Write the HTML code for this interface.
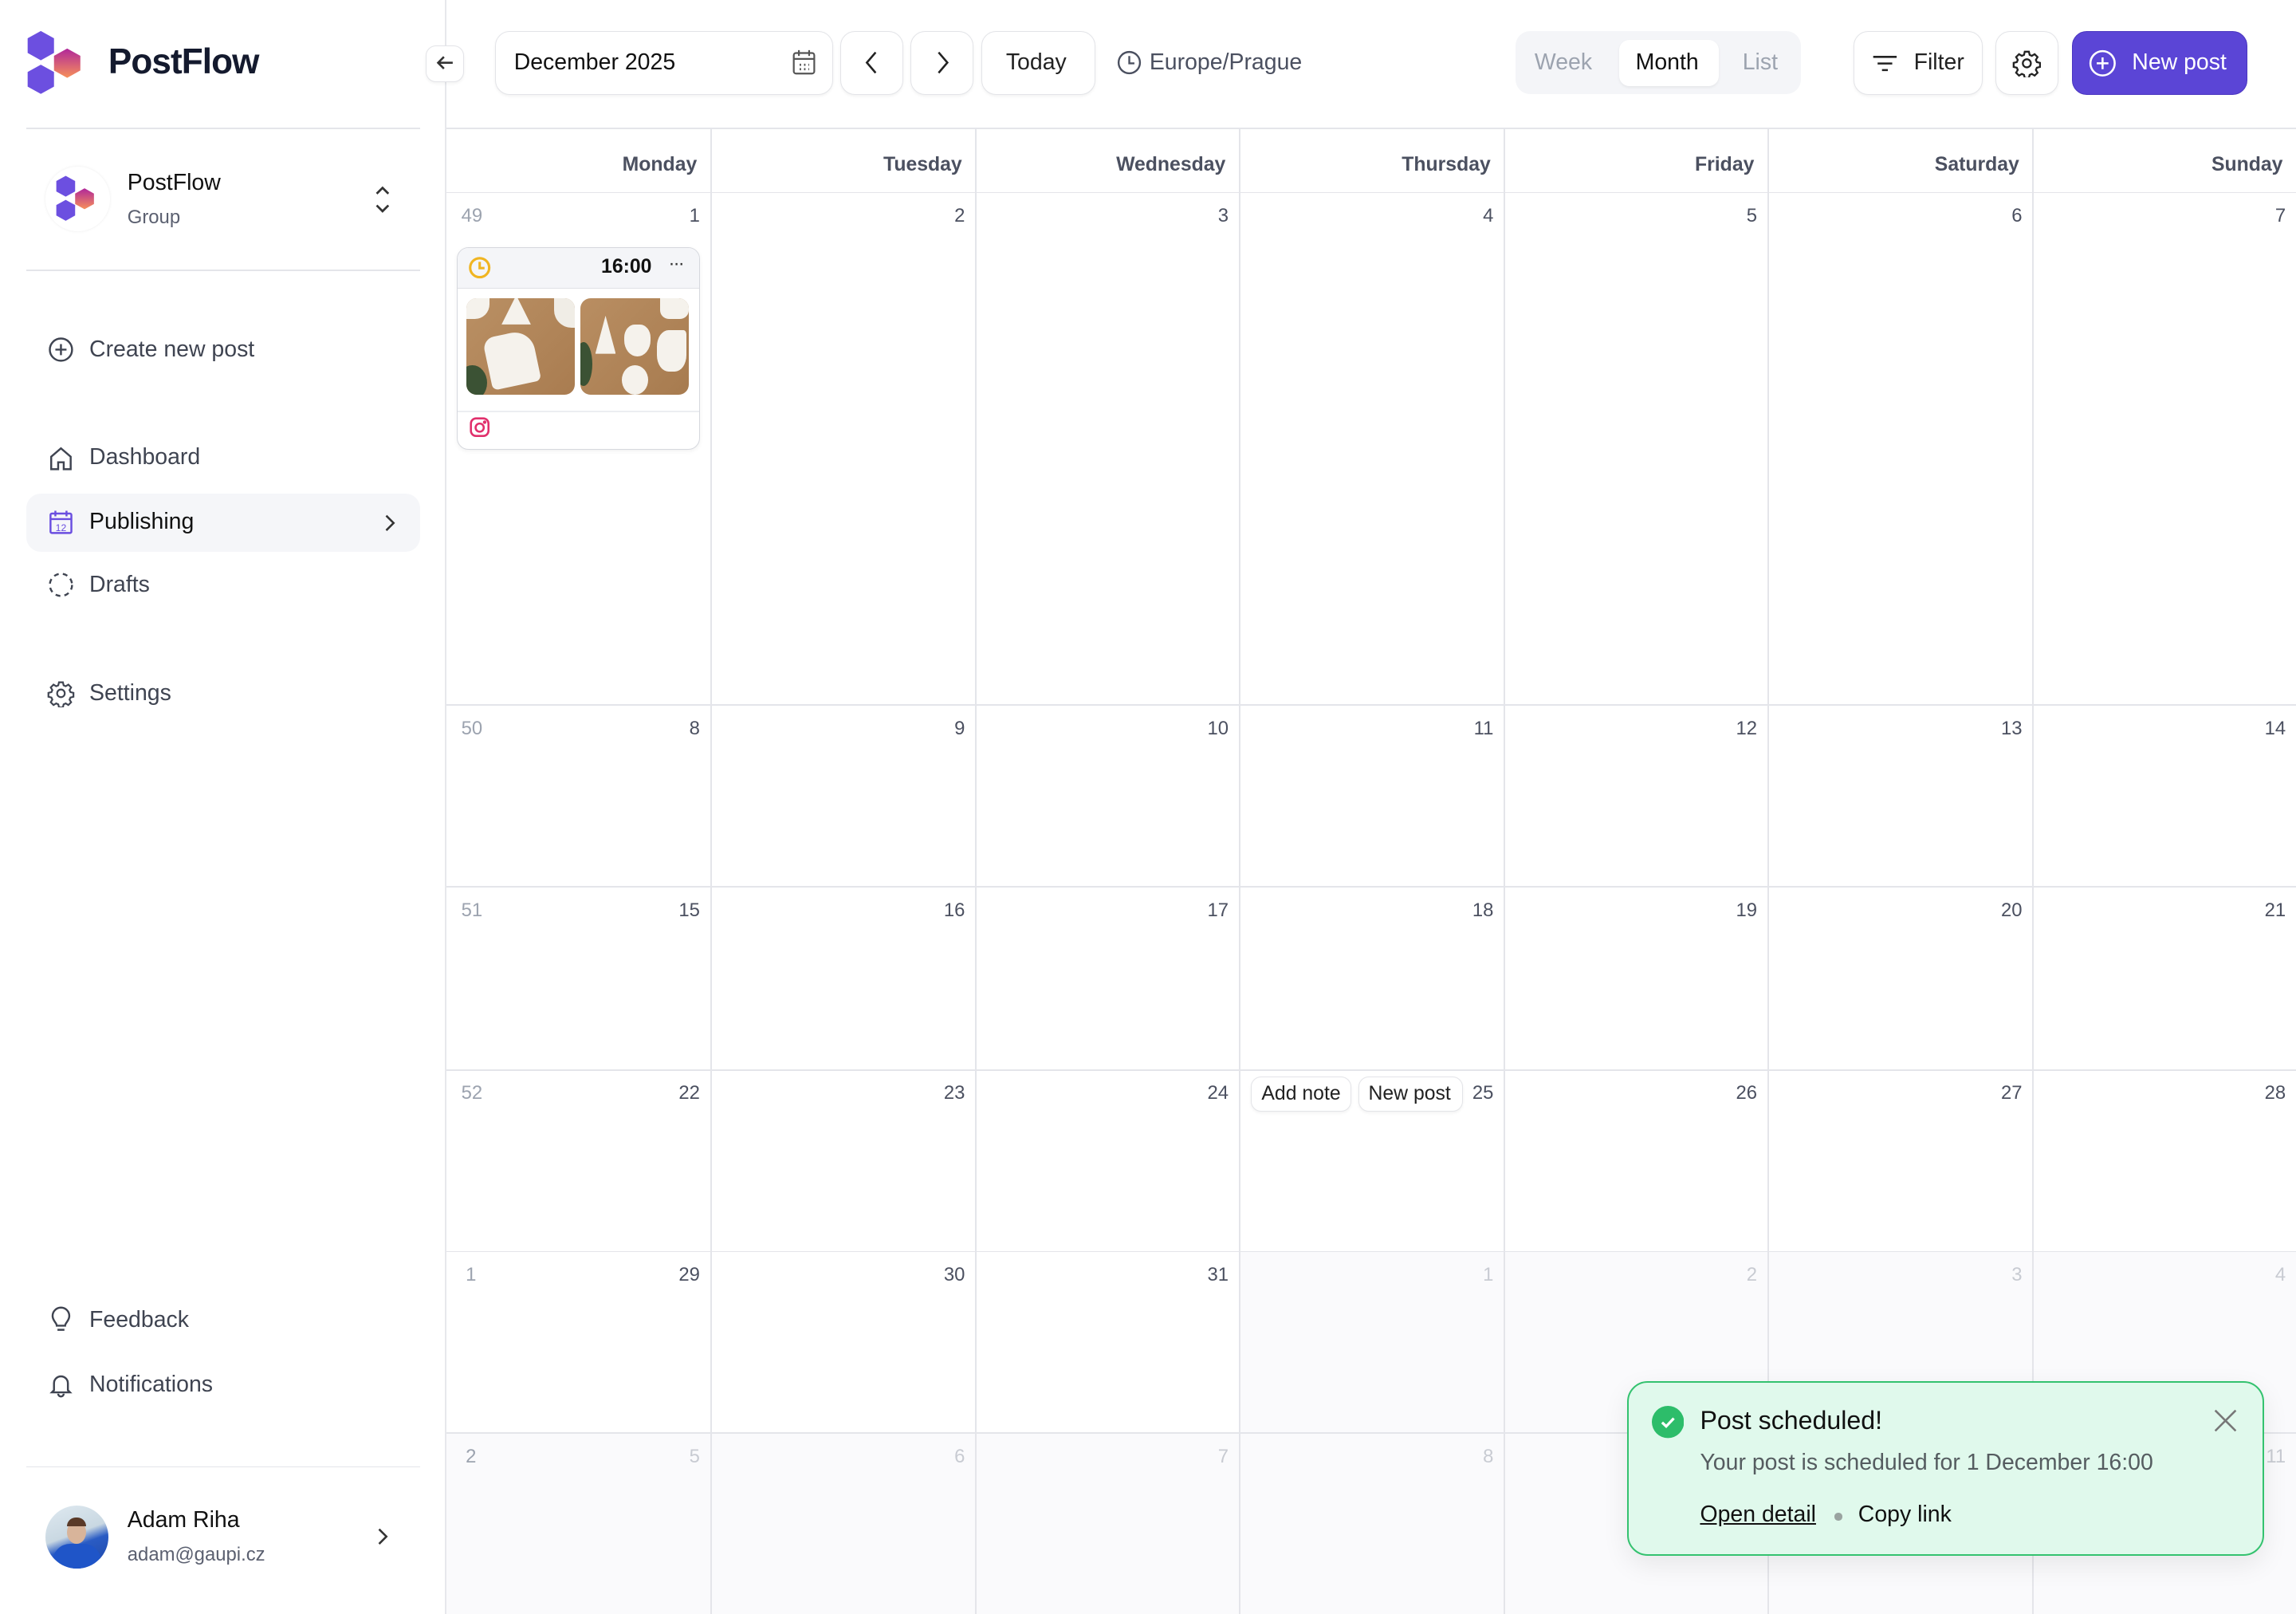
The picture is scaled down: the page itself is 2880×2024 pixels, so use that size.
<!DOCTYPE html>
<html><head><meta charset="utf-8">
<style>
html,body{margin:0;padding:0;}
html{zoom:1.83673;}
body{width:1568px;height:1102px;position:relative;overflow:hidden;background:#fff;font-family:"Liberation Sans",sans-serif;color:#111827;}
.a{position:absolute;}
.btn{position:absolute;border:1px solid #e3e4e8;border-radius:10px;background:#fff;box-shadow:0 1px 2px rgba(0,0,0,.05);box-sizing:border-box;}
.nav{position:absolute;left:32px;font-size:15.5px;color:#3f4451;display:flex;align-items:center;gap:10px;}
.nav svg{width:19px;height:19px;}
.hd{position:absolute;top:105px;font-size:13.5px;font-weight:bold;color:#4b5060;text-align:right;width:171px;}
.vl{position:absolute;top:87px;width:1px;height:1015px;background:#e4e5ea;}
.hl{position:absolute;left:305px;width:1263px;height:1px;background:#e4e5ea;}
.n{position:absolute;font-size:13px;color:#4b5060;text-align:right;width:171px;}
.w{position:absolute;font-size:13px;color:#9ca3af;}
.g{color:#c8cbd2;}
</style></head><body>

<!-- sidebar -->
<div class="a" style="left:304px;top:0;width:1px;height:1102px;background:#e7e8ec"></div>
<svg class="a" style="left:17px;top:20px" width="42" height="46" viewBox="0 0 42 46">
<defs><linearGradient id="lg" x1="0" y1="0" x2="0" y2="1"><stop offset="0" stop-color="#b0279a"/><stop offset="1" stop-color="#f7905a"/></linearGradient></defs>
<polygon points="11,1 20,6 20,16 11,21 2,16 2,6" fill="#6c4fe0"/>
<polygon points="11,24 20,29 20,39 11,44 2,39 2,29" fill="#6c4fe0"/>
<polygon points="29,13 38,18 38,28 29,33 20,28 20,18" fill="url(#lg)"/>
</svg>
<div class="a" style="left:74px;top:29px;font-size:24px;font-weight:bold;letter-spacing:-0.5px;color:#141a2e">PostFlow</div>
<div class="a" style="left:18px;top:87px;width:269px;height:1px;background:#e4e5ea"></div>

<div class="a" style="left:31px;top:114px;width:44px;height:44px;border-radius:50%;background:#fff;box-shadow:0 0 2px rgba(0,0,0,.08)"></div>
<svg class="a" style="left:37px;top:119px" width="30" height="33" viewBox="0 0 42 46">
<polygon points="11,1 20,6 20,16 11,21 2,16 2,6" fill="#6c4fe0"/>
<polygon points="11,24 20,29 20,39 11,44 2,39 2,29" fill="#6c4fe0"/>
<polygon points="29,13 38,18 38,28 29,33 20,28 20,18" fill="url(#lg)"/>
</svg>
<div class="a" style="left:87px;top:116px;font-size:15.5px;color:#111">PostFlow</div>
<div class="a" style="left:87px;top:141px;font-size:13px;color:#5b6070">Group</div>
<svg class="a" style="left:254px;top:125px" width="14" height="22" viewBox="0 0 14 22" fill="none" stroke="#333" stroke-width="1.5"><path d="M3 7l4-4 4 4M3 15l4 4 4-4"/></svg>
<div class="a" style="left:18px;top:184px;width:269px;height:1px;background:#e4e5ea"></div>

<div class="nav" style="top:229px"><svg viewBox="0 0 20 20" fill="none" stroke="#3f4451" stroke-width="1.4"><circle cx="10" cy="10" r="8"/><path d="M10 6v8M6 10h8"/></svg>Create new post</div>
<div class="nav" style="top:303px"><svg viewBox="0 0 20 20" fill="none" stroke="#3f4451" stroke-width="1.4"><path d="M3 9l7-6 7 6v9h-5v-5H8v5H3z"/></svg>Dashboard</div>
<div class="a" style="left:18px;top:337px;width:269px;height:40px;border-radius:10px;background:#f5f6f9"></div>
<div class="nav" style="top:347px;color:#111;font-weight:500"><svg viewBox="0 0 20 20" fill="none" stroke="#6a4ee0" stroke-width="1.4"><rect x="2.5" y="4" width="15" height="14" rx="1"/><path d="M2.5 8h15M6 2v4M14 2v4"/><text x="10" y="16.5" font-size="7" text-anchor="middle" fill="#6a4ee0" stroke="none" font-family="Liberation Sans">12</text></svg>Publishing</div>
<svg class="a" style="left:261px;top:350px" width="10" height="14" viewBox="0 0 10 14" fill="none" stroke="#333" stroke-width="1.4"><path d="M3 2l5 5-5 5"/></svg>
<div class="nav" style="top:390px"><svg viewBox="0 0 20 20" fill="none" stroke="#3f4451" stroke-width="1.4" stroke-dasharray="3.5 3"><circle cx="10" cy="10" r="8"/></svg>Drafts</div>
<div class="nav" style="top:464px"><svg viewBox="0 0 24 24" fill="none" stroke="#3f4451" stroke-width="1.5"><path d="M10.3 2.5h3.4l.6 2.6 1.8.8 2.3-1.4 2.4 2.4-1.4 2.3.8 1.8 2.6.6v3.4l-2.6.6-.8 1.8 1.4 2.3-2.4 2.4-2.3-1.4-1.8.8-.6 2.6h-3.4l-.6-2.6-1.8-.8-2.3 1.4-2.4-2.4 1.4-2.3-.8-1.8-2.6-.6v-3.4l2.6-.6.8-1.8-1.4-2.3 2.4-2.4 2.3 1.4 1.8-.8z"/><circle cx="12" cy="12" r="3.3"/></svg>Settings</div>

<div class="nav" style="top:892px"><svg viewBox="0 0 20 20" fill="none" stroke="#3f4451" stroke-width="1.4"><path d="M7 14c0-2-3-3.5-3-7a6 6 0 0112 0c0 3.5-3 5-3 7zM7.5 17h5"/></svg>Feedback</div>
<div class="nav" style="top:936px"><svg viewBox="0 0 20 20" fill="none" stroke="#3f4451" stroke-width="1.4"><path d="M5 14V9a5 5 0 0110 0v5l1.5 1.5h-13zM8 16.5a2 2 0 004 0"/></svg>Notifications</div>
<div class="a" style="left:18px;top:1001px;width:269px;height:1px;background:#e4e5ea"></div>
<div class="a" style="left:31px;top:1028px;width:43px;height:43px;border-radius:50%;overflow:hidden;background:linear-gradient(160deg,#dfe9f0 0%,#c9d8e2 45%,#2a5cc4 60%,#1e47a8 100%)">
<div class="a" style="left:15px;top:10px;width:13px;height:16px;border-radius:50%;background:#d8b49a"></div>
<div class="a" style="left:15px;top:8px;width:13px;height:6px;border-radius:6px 6px 0 0;background:#5a3a28"></div>
<div class="a" style="left:5px;top:26px;width:33px;height:20px;border-radius:12px 12px 0 0;background:#1f55c8"></div></div>
<div class="a" style="left:87px;top:1029px;font-size:15.5px;color:#111">Adam Riha</div>
<div class="a" style="left:87px;top:1054px;font-size:13px;color:#5b6070">adam@gaupi.cz</div>
<svg class="a" style="left:256px;top:1042px" width="10" height="14" viewBox="0 0 10 14" fill="none" stroke="#333" stroke-width="1.4"><path d="M3 2l5 5-5 5"/></svg>

<!-- toolbar -->
<div class="btn" style="left:291px;top:31px;width:26px;height:25px;border-radius:7px"></div>
<svg class="a" style="left:296px;top:35px" width="16" height="16" viewBox="0 0 16 16" fill="none" stroke="#333" stroke-width="1.4"><path d="M13 8H3M7 4L3 8l4 4"/></svg>
<div class="btn" style="left:338px;top:21px;width:231px;height:44px"></div>
<div class="a" style="left:351px;top:34px;font-size:15.5px;color:#111">December 2025</div>
<svg class="a" style="left:540px;top:33px" width="18" height="19" viewBox="0 0 18 19" fill="none" stroke="#555" stroke-width="1.2"><rect x="2" y="3" width="14" height="14" rx="1.5"/><path d="M2 7h14M5.5 1v4M12.5 1v4"/><path d="M6 11h1M9 11h1M12 11h0.5M6 14h1M9 14h1M12 14h0.5" stroke-width="1.5"/></svg>
<div class="btn" style="left:574px;top:21px;width:43px;height:44px"></div>
<svg class="a" style="left:588px;top:34px" width="14" height="18" viewBox="0 0 14 18" fill="none" stroke="#222" stroke-width="1.4"><path d="M10 2L4 9l6 7"/></svg>
<div class="btn" style="left:622px;top:21px;width:43px;height:44px"></div>
<svg class="a" style="left:637px;top:34px" width="14" height="18" viewBox="0 0 14 18" fill="none" stroke="#222" stroke-width="1.4"><path d="M4 2l6 7-6 7"/></svg>
<div class="btn" style="left:670px;top:21px;width:78px;height:44px"></div>
<div class="a" style="left:687px;top:34px;font-size:15.5px;color:#222">Today</div>
<svg class="a" style="left:762px;top:34px" width="18" height="18" viewBox="0 0 18 18" fill="none" stroke="#4b5060" stroke-width="1.3"><circle cx="9" cy="9" r="7.3"/><path d="M9 4.5V9.5h3.5"/></svg>
<div class="a" style="left:785px;top:34px;font-size:15.5px;color:#4b5060">Europe/Prague</div>

<div class="a" style="left:1035px;top:21px;width:195px;height:43px;border-radius:10px;background:#f4f5f8"></div>
<div class="a" style="left:1106px;top:27px;width:68px;height:32px;border-radius:7px;background:#fff;box-shadow:0 1px 2px rgba(0,0,0,.06)"></div>
<div class="a" style="left:1048px;top:34px;font-size:15.5px;color:#9ca3af">Week</div>
<div class="a" style="left:1117px;top:34px;font-size:15.5px;color:#111">Month</div>
<div class="a" style="left:1190px;top:34px;font-size:15.5px;color:#9ca3af">List</div>

<div class="btn" style="left:1266px;top:21px;width:88px;height:44px"></div>
<svg class="a" style="left:1277px;top:35px" width="20" height="16" viewBox="0 0 20 16" fill="none" stroke="#222" stroke-width="1.4"><path d="M2 4h16M5 8.5h10M8 13h4"/></svg>
<div class="a" style="left:1307px;top:34px;font-size:15.5px;color:#222">Filter</div>
<div class="btn" style="left:1363px;top:21px;width:43px;height:44px"></div>
<svg class="a" style="left:1374px;top:33px" width="20" height="20" viewBox="0 0 24 24" fill="none" stroke="#222" stroke-width="1.5"><path d="M10.3 2.5h3.4l.6 2.6 1.8.8 2.3-1.4 2.4 2.4-1.4 2.3.8 1.8 2.6.6v3.4l-2.6.6-.8 1.8 1.4 2.3-2.4 2.4-2.3-1.4-1.8.8-.6 2.6h-3.4l-.6-2.6-1.8-.8-2.3 1.4-2.4-2.4 1.4-2.3-.8-1.8-2.6-.6v-3.4l2.6-.6.8-1.8-1.4-2.3 2.4-2.4 2.3 1.4 1.8-.8z"/><circle cx="12" cy="12" r="3.3"/></svg>
<div class="a" style="left:1415px;top:21px;width:120px;height:44px;border-radius:10px;background:#5b45d6;box-sizing:border-box;border:1px solid #4a36c0"></div>
<svg class="a" style="left:1426px;top:33px" width="20" height="20" viewBox="0 0 20 20" fill="none" stroke="#fff" stroke-width="1.4"><circle cx="10" cy="10" r="8.3"/><path d="M10 6v8M6 10h8"/></svg>
<div class="a" style="left:1456px;top:34px;font-size:15.5px;color:#fff">New post</div>

<!-- calendar -->
<div class="hl" style="top:87px"></div>
<div class="hl" style="top:131px"></div>
<div class="a" style="left:305px;top:854px;width:1263px;height:248px;background:#fafafc"></div>
<div class="a" style="left:305px;top:855px;width:541px;height:123px;background:#fff"></div>
<div class="hl" style="top:481px"></div>
<div class="hl" style="top:605px"></div>
<div class="hl" style="top:730px"></div>
<div class="hl" style="top:854px"></div>
<div class="hl" style="top:978px"></div>
<div class="vl" style="left:485px"></div><div class="vl" style="left:666px"></div><div class="vl" style="left:846px"></div><div class="vl" style="left:1027px"></div><div class="vl" style="left:1207px"></div><div class="vl" style="left:1388px"></div>

<div class="hd" style="left:305px">Monday</div><div class="hd" style="left:486px">Tuesday</div><div class="hd" style="left:666px">Wednesday</div><div class="hd" style="left:847px">Thursday</div><div class="hd" style="left:1027px">Friday</div><div class="hd" style="left:1208px">Saturday</div><div class="hd" style="left:1388px">Sunday</div>

<div class="w" style="left:315px;top:140px">49</div>
<div class="n" style="left:307px;top:140px">1</div><div class="n" style="left:488px;top:140px">2</div><div class="n" style="left:668px;top:140px">3</div><div class="n" style="left:849px;top:140px">4</div><div class="n" style="left:1029px;top:140px">5</div><div class="n" style="left:1210px;top:140px">6</div><div class="n" style="left:1390px;top:140px">7</div>
<div class="w" style="left:315px;top:490px">50</div>
<div class="n" style="left:307px;top:490px">8</div><div class="n" style="left:488px;top:490px">9</div><div class="n" style="left:668px;top:490px">10</div><div class="n" style="left:849px;top:490px">11</div><div class="n" style="left:1029px;top:490px">12</div><div class="n" style="left:1210px;top:490px">13</div><div class="n" style="left:1390px;top:490px">14</div>
<div class="w" style="left:315px;top:614px">51</div>
<div class="n" style="left:307px;top:614px">15</div><div class="n" style="left:488px;top:614px">16</div><div class="n" style="left:668px;top:614px">17</div><div class="n" style="left:849px;top:614px">18</div><div class="n" style="left:1029px;top:614px">19</div><div class="n" style="left:1210px;top:614px">20</div><div class="n" style="left:1390px;top:614px">21</div>
<div class="w" style="left:315px;top:739px">52</div>
<div class="n" style="left:307px;top:739px">22</div><div class="n" style="left:488px;top:739px">23</div><div class="n" style="left:668px;top:739px">24</div><div class="n" style="left:849px;top:739px">25</div><div class="n" style="left:1029px;top:739px">26</div><div class="n" style="left:1210px;top:739px">27</div><div class="n" style="left:1390px;top:739px">28</div>
<div class="btn" style="left:854px;top:735px;width:69px;height:24px;border-radius:7px;font-size:13.5px;color:#222;padding:4px 0 0 7px">Add note</div>
<div class="btn" style="left:928px;top:735px;width:71px;height:24px;border-radius:7px;font-size:13.5px;color:#222;padding:4px 0 0 6px">New post</div>
<div class="w" style="left:318px;top:863px">1</div>
<div class="n" style="left:307px;top:863px">29</div><div class="n" style="left:488px;top:863px">30</div><div class="n" style="left:668px;top:863px">31</div><div class="n g" style="left:849px;top:863px">1</div><div class="n g" style="left:1029px;top:863px">2</div><div class="n g" style="left:1210px;top:863px">3</div><div class="n g" style="left:1390px;top:863px">4</div>
<div class="w" style="left:318px;top:987px">2</div>
<div class="n g" style="left:307px;top:987px">5</div><div class="n g" style="left:488px;top:987px">6</div><div class="n g" style="left:668px;top:987px">7</div><div class="n g" style="left:849px;top:987px">8</div><div class="n g" style="left:1390px;top:987px">11</div>

<!-- post card -->
<div class="a" style="left:312px;top:169px;width:166px;height:138px;border:1px solid #d6d8de;border-radius:8px;box-sizing:border-box;overflow:hidden;background:#fff;box-shadow:0 1px 3px rgba(0,0,0,.06)">
<div class="a" style="left:0;top:0;width:166px;height:27px;background:#f4f5f8;border-bottom:1px solid #dfe1e6"></div>
<svg class="a" style="left:7px;top:5px" width="16" height="16" viewBox="0 0 16 16" fill="none" stroke="#f0b522" stroke-width="1.7"><circle cx="8" cy="8" r="6.5"/><path d="M8 4v4.3h3.3"/></svg>
<div class="a" style="left:98px;top:5px;font-size:13.5px;font-weight:bold;color:#111">16:00</div>
<div class="a" style="left:144px;top:3px;font-size:13px;color:#333;letter-spacing:-1px">···</div>
<div class="a" style="left:6px;top:34px;width:74px;height:66px;border-radius:7px;overflow:hidden;background:linear-gradient(135deg,#ba9064,#a97c50)">
<div class="a" style="left:-6px;top:46px;width:20px;height:24px;background:#3b5234;border-radius:50%"></div>
<div class="a" style="left:14px;top:24px;width:34px;height:36px;background:#f5f2ec;border-radius:8px 14px 4px 4px;transform:rotate(-12deg)"></div>
<div class="a" style="left:24px;top:-2px;width:20px;height:20px;background:#f5f2ec;clip-path:polygon(50% 0,100% 100%,0 100%)"></div>
<div class="a" style="left:0;top:0;width:16px;height:14px;background:#f5f2ec;border-radius:0 0 10px 0"></div>
<div class="a" style="left:60px;top:0;width:14px;height:20px;background:#f0ede6;border-radius:0 0 0 12px"></div></div>
<div class="a" style="left:84px;top:34px;width:74px;height:66px;border-radius:7px;overflow:hidden;background:linear-gradient(135deg,#b98e62,#a77b4f)">
<div class="a" style="left:-4px;top:30px;width:12px;height:30px;background:#3b5234;border-radius:50%"></div>
<div class="a" style="left:10px;top:12px;width:14px;height:26px;background:#f5f2ec;clip-path:polygon(50% 0,100% 100%,0 100%)"></div>
<div class="a" style="left:30px;top:18px;width:18px;height:22px;background:#f5f2ec;border-radius:40% 40% 50% 50%"></div>
<div class="a" style="left:52px;top:22px;width:20px;height:28px;background:#f5f2ec;border-radius:40% 10% 40% 40%"></div>
<div class="a" style="left:28px;top:46px;width:18px;height:20px;background:#f5f2ec;border-radius:50%"></div>
<div class="a" style="left:54px;top:0;width:20px;height:14px;background:#f5f2ec;border-radius:0 0 6px 6px"></div></div>
<div class="a" style="left:0;top:111px;width:166px;height:1px;background:#eceef1"></div>
<svg class="a" style="left:7px;top:114px" width="16" height="16" viewBox="0 0 16 16" fill="none" stroke="#e1306c" stroke-width="1.4"><rect x="2" y="2" width="12" height="12" rx="3.5"/><circle cx="8" cy="8.3" r="2.8"/><circle cx="11.4" cy="4.6" r="0.5" fill="#e1306c"/></svg>
</div>

<!-- toast -->
<div class="a" style="left:1111px;top:943px;width:435px;height:119px;border:1.5px solid #34c26f;border-radius:14px;background:#e0f9ec;box-sizing:border-box;box-shadow:0 6px 18px rgba(0,0,0,.08)"></div>
<svg class="a" style="left:1128px;top:960px" width="22" height="22" viewBox="0 0 22 22"><circle cx="11" cy="11" r="11" fill="#2dbd6a"/><path d="M7 11.3l2.8 2.7L15 8.5" fill="none" stroke="#fff" stroke-width="1.8"/></svg>
<div class="a" style="left:1161px;top:960px;font-size:17.5px;color:#111">Post scheduled!</div>
<svg class="a" style="left:1511px;top:961px" width="18" height="18" viewBox="0 0 18 18" stroke="#777" stroke-width="1.4"><path d="M2 2l14 14M16 2L2 16"/></svg>
<div class="a" style="left:1161px;top:990px;font-size:15.5px;color:#555c60">Your post is scheduled for 1 December 16:00</div>
<div class="a" style="left:1161px;top:1025px;font-size:15.5px;color:#111;text-decoration:underline">Open detail</div>
<div class="a" style="left:1253px;top:1033px;width:5px;height:5px;border-radius:50%;background:#9aa3a0"></div>
<div class="a" style="left:1269px;top:1025px;font-size:15.5px;color:#111">Copy link</div>
</body></html>
